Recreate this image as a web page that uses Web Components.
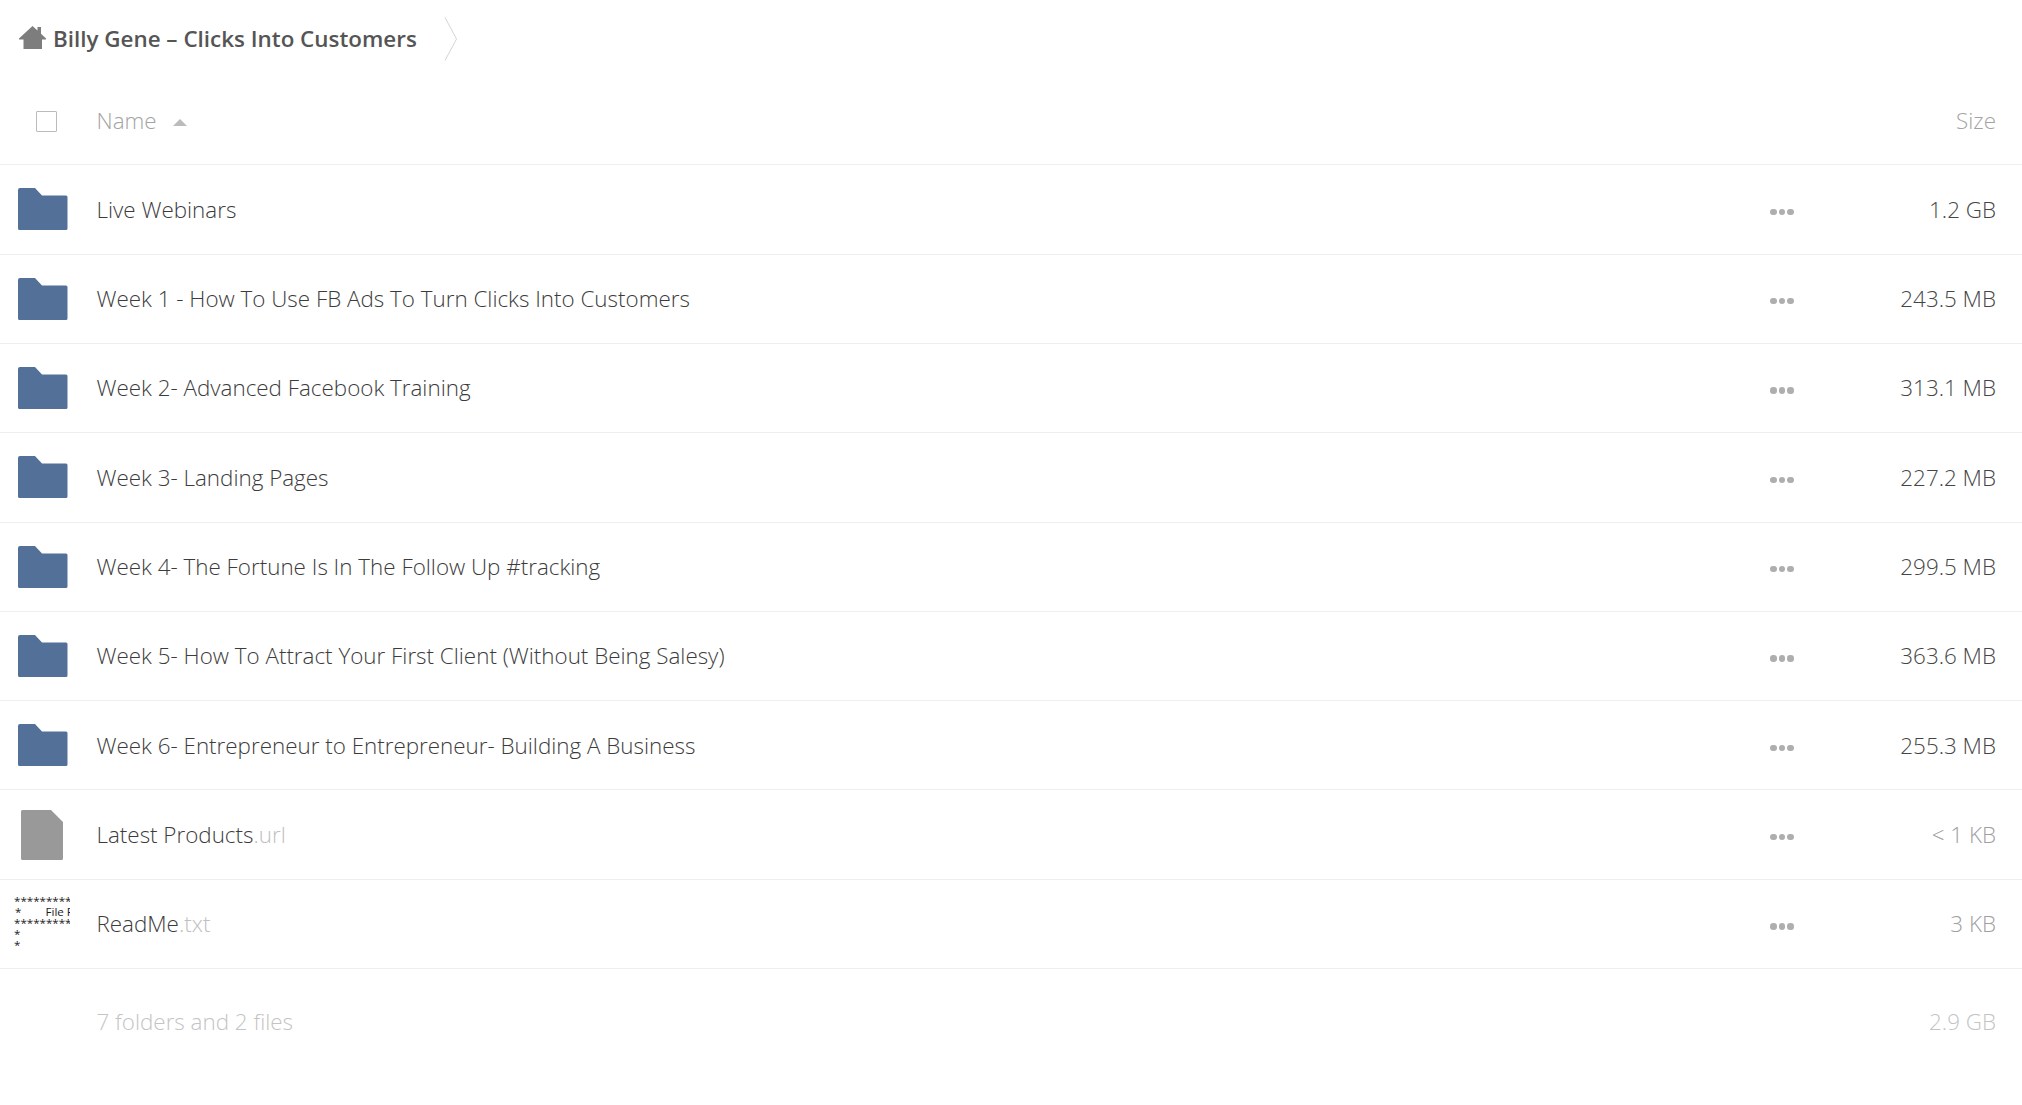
<!DOCTYPE html>
<html><head><meta charset="utf-8"><style>
html,body{margin:0;background:#fff;font-family:"Open Sans",sans-serif}
body{height:1105px;overflow:hidden}
</style></head><body>
<file-app>
<file-crumbs slot="crumbs" label="Billy Gene – Clicks Into Customers"></file-crumbs>
<file-head></file-head>
<file-row kind="folder" name="Live Webinars" size="1.2 GB"></file-row>
<file-row kind="folder" name="Week 1 - How To Use FB Ads To Turn Clicks Into Customers" size="243.5 MB"></file-row>
<file-row kind="folder" name="Week 2- Advanced Facebook Training" size="313.1 MB"></file-row>
<file-row kind="folder" name="Week 3- Landing Pages" size="227.2 MB"></file-row>
<file-row kind="folder" name="Week 4- The Fortune Is In The Follow Up #tracking" size="299.5 MB"></file-row>
<file-row kind="folder" name="Week 5- How To Attract Your First Client (Without Being Salesy)" size="363.6 MB"></file-row>
<file-row kind="folder" name="Week 6- Entrepreneur to Entrepreneur- Building A Business" size="255.3 MB"></file-row>
<file-row kind="file" name="Latest Products" ext=".url" size="&lt; 1 KB" light></file-row>
<file-row kind="text" name="ReadMe" ext=".txt" size="3 KB" light></file-row>
<file-summary label="7 folders and 2 files" size="2.9 GB"></file-summary>
</file-app>
<script>
function def(name,html){
  customElements.define(name,class extends HTMLElement{
    connectedCallback(){
      if(this.shadowRoot)return;
      const r=this.attachShadow({mode:'open'});
      r.innerHTML=html(this);
    }
  });
}
const esc=s=>(s||'').replace(/&/g,'&amp;').replace(/</g,'&lt;');
def('file-app',()=>`<style>:host{display:block}</style><slot name="crumbs"></slot><slot></slot>`);
def('file-crumbs',e=>`<style>
:host{display:flex;align-items:center;height:77px;font:600 22.4px/28px "Open Sans",sans-serif;color:#555}
svg{display:block;flex:none}
.home{margin-left:19px;margin-right:7px;margin-top:-2px}
.label{white-space:nowrap}
.chev{margin-left:27px}
</style>
<svg class="home" width="27" height="25" viewBox="0 0 27 25"><path d="M13.5 1 L18.5 5.6 V2 H22 V8.8 L27 13.5 V14.5 H23 V24 H4.5 V14.5 H0 V13.5 Z" fill="#7d7d7d"/></svg>
<span class="label">${esc(e.getAttribute('label'))}</span>
<svg class="chev" width="14" height="44" viewBox="0 0 14 44"><path d="M1 0.5 L12.5 22 L1 43.5" fill="none" stroke="#d4d4d4" stroke-width="1"/></svg>`);
def('file-head',()=>`<style>
:host{display:flex;align-items:center;box-sizing:border-box;height:88.2px;border-bottom:1.33px solid #eee;font:300 22.4px/28px "Open Sans",sans-serif;color:#a3a3a3;padding-right:26px}
.box{width:21px;height:21px;border:1.5px solid #bbb;border-radius:1px;margin-left:36px;margin-right:39.5px;margin-top:2px;box-sizing:border-box;flex:none;background:#fff}
.name{margin-top:1px}
.tri{width:0;height:0;border-left:7px solid transparent;border-right:7px solid transparent;border-bottom:7px solid #bbb;margin-left:16px;margin-top:3px}
.size{margin-left:auto;margin-top:1px}
</style><span class="box"></span><span class="name">Name</span><span class="tri"></span><span class="size">Size</span>`);
const FOLDER=`<svg width="49.5" height="42" viewBox="0 0 49.5 42"><path d="M2 0 H17 L24 7.5 H48 A1.5 1.5 0 0 1 49.5 9 V40.5 A1.5 1.5 0 0 1 48 42 H1.5 A1.5 1.5 0 0 1 0 40.5 V2 A2 2 0 0 1 2 0 Z" fill="#537099"/></svg>`;
const FILE=`<svg width="42" height="50" viewBox="0 0 42 50"><path d="M1.5 0 H30 L42 12 V48.5 A1.5 1.5 0 0 1 40.5 50 H1.5 A1.5 1.5 0 0 1 0 48.5 V1.5 A1.5 1.5 0 0 1 1.5 0 Z" fill="#999"/></svg>`;
def('file-row',e=>{
 const k=e.getAttribute('kind');
 const light=e.hasAttribute('light');
 let icon=k==='folder'?`<span class="ic folder">${FOLDER}</span>`:k==='file'?`<span class="ic file">${FILE}</span>`:`<span class="ic txt"><file-preview></file-preview></span>`;
 return `<style>
:host{display:flex;align-items:center;box-sizing:border-box;height:89.33px;border-bottom:1.33px solid #eee;font:300 22.4px/28px "Open Sans",sans-serif;color:#3c3c3c;padding-right:26px}
.ic{width:96.5px;flex:none;display:flex;box-sizing:border-box}
.folder{padding-left:18px}
.file{padding-left:21px}
.txt{padding-left:14px}
svg{display:block}
.name{white-space:nowrap;margin-top:0.7px}
.ext{color:#c0c0c0}
.act{margin-left:auto;display:flex;gap:2px;width:24px;flex:none;margin-top:5px;margin-right:1px}
.act i{width:6.5px;height:6.5px;border-radius:50%;background:#aeaeae;display:block}
.size{width:201px;text-align:right;margin-top:0.7px;flex:none;color:${light?'#a0a0a0':'#454545'}}
</style>${icon}<span class="name">${esc(e.getAttribute('name'))}<span class="ext">${esc(e.getAttribute('ext'))}</span></span><span class="act"><i></i><i></i><i></i></span><span class="size">${esc(e.getAttribute('size'))}</span>`});
def('file-preview',()=>`<style>
:host{display:block;width:56px;height:58px;overflow:hidden;font:400 11.6px/11px "Open Sans",sans-serif;color:#1c1c1c;white-space:pre}
div{height:11px}
.f{padding-left:1px}
</style><div>**********</div><div class="f">*        File P</div><div>**********</div><div>*</div><div>*</div>`);
def('file-summary',e=>`<style>
:host{display:flex;align-items:center;box-sizing:border-box;height:106px;font:300 22.4px/28px "Open Sans",sans-serif;color:#c4c4c4;padding:0 26px 0 96.5px}
.size{margin-left:auto}
</style><span>${esc(e.getAttribute('label'))}</span><span class="size">${esc(e.getAttribute('size'))}</span>`);
</script>
</body></html>
